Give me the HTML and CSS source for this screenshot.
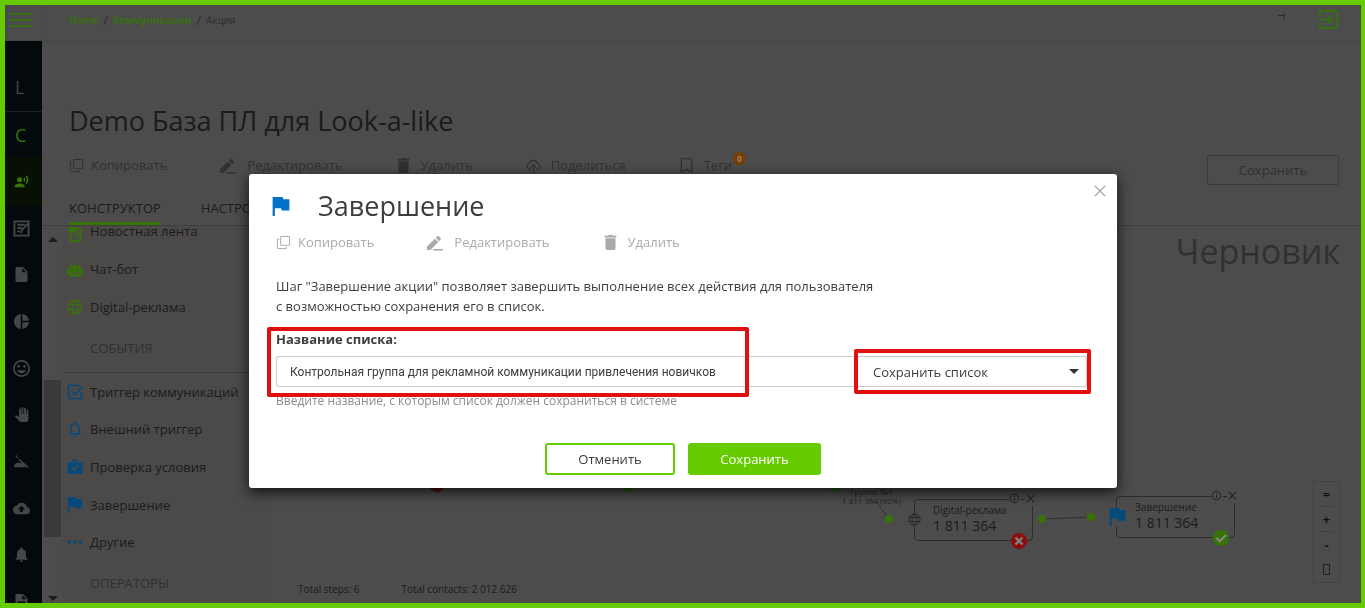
FILE: index.html
```html
<!DOCTYPE html>
<html lang="ru">
<head>
    <meta charset="UTF-8">
    <meta name="viewport" content="width=device-width, initial-scale=1.0">
    <title>Акция</title>
    <link rel="stylesheet" href="styles.css">
</head>
<body>
    <!-- Иконки -->
    <svg class="sprite" aria-hidden="true">
        <symbol id="i-copy" viewBox="0 0 16 16"><path d="M5 1.500h9.500v9.500H5zM3.500 4.500H1.500v10h9.500v-2" fill="none" stroke="currentColor" stroke-width="1"/></symbol>
        <symbol id="i-edit" viewBox="0 0 18 18"><path d="M1 13.200V17h3.800L13 8.600 9.400 5zM15.600 5.800c.4-.4.4-1 0-1.400L13.500 2.300c-.4-.4-1-.4-1.400 0L10.300 4.100l3.600 3.600zM8 16h10v1.400H7z"/></symbol>
        <symbol id="i-trash" viewBox="5 3 14 18"><path d="M6 19c0 1.100.9 2 2 2h8c1.100 0 2-.9 2-2V7H6zM19 4h-3.500l-1-1h-5l-1 1H5v2h14z"/></symbol>
        <symbol id="i-share" viewBox="0 0 18 18"><path d="M6 13.500H4.500A3.500 3.500 0 0 1 4 6.600a5.200 5.200 0 0 1 10 0 3.500 3.500 0 0 1-.5 6.900H12M9 17V8.500M6 11.200l3-3 3 3" fill="none" stroke="currentColor" stroke-width="1.300"/></symbol>
        <symbol id="i-tag" viewBox="5 3 14 18"><path d="M17 3H7c-1.100 0-2 .9-2 2v16l7-3 7 3V5c0-1.100-.9-2-2-2zm.5 15.500L12 16l-5.500 2.500v-14h11z"/></symbol>
        <symbol id="i-flag" viewBox="5 4 15 17"><path d="M14.400 6L14 4H5v17h2v-7h5.600l.4 2h7V6z"/></symbol>
        <symbol id="i-exit" viewBox="3 3 18 18"><path d="M10.090 15.590L11.500 17l5-5-5-5-1.410 1.410L12.670 11H3v2h9.670zM19 3H5a2 2 0 0 0-2 2v4h2V5h14v14H5v-4H3v4a2 2 0 0 0 2 2h14a2 2 0 0 0 2-2V5a2 2 0 0 0-2-2z"/></symbol>
        <symbol id="i-voice" viewBox="0 2 24 20"><circle cx="9" cy="9" r="4"/><path d="M9 15c-2.670 0-8 1.340-8 4v2h16v-2c0-2.660-5.330-4-8-4zM16.760 5.360l-1.680 1.690c.84 1.180.84 2.710 0 3.890l1.680 1.690c2.020-2.020 2.020-5.070 0-7.270zM20.070 2l-1.630 1.630c2.770 3.020 2.770 7.560 0 10.740L20.070 16c3.900-3.890 3.910-9.950 0-14z"/></symbol>
        <symbol id="i-note" viewBox="0 0 18 18"><path d="M1.500 1.500h15v15h-15z M4.500 5h8M4.500 8.500h5M4.500 12h3M8.500 14l1-3.500 6-6.500" fill="none" stroke="currentColor" stroke-width="2"/></symbol>
        <symbol id="i-file" viewBox="4 2 16 20"><path d="M6 2c-1.100 0-2 .9-2 2v16c0 1.100.9 2 2 2h12c1.100 0 2-.9 2-2V8l-6-6zm7 7V3.500L18.500 9z"/></symbol>
        <symbol id="i-pie" viewBox="2 2 20 20"><path d="M11 2v20c-5.070-.5-9-4.790-9-10s3.930-9.500 9-10zm2.030 0v8.990H22c-.47-4.740-4.240-8.520-8.970-8.990zm0 11.010V22c4.740-.47 8.500-4.250 8.970-8.990z"/></symbol>
        <symbol id="i-mood" viewBox="2 2 20 20"><path d="M12 2a10 10 0 1 0 0 20 10 10 0 0 0 0-20zm0 18a8 8 0 1 1 0-16 8 8 0 0 1 0 16zm3.500-9a1.500 1.500 0 1 0 0-3 1.500 1.500 0 0 0 0 3zm-7 0a1.500 1.500 0 1 0 0-3 1.500 1.500 0 0 0 0 3zm3.500 6.500c2.330 0 4.310-1.460 5.110-3.500H6.890c.8 2.040 2.780 3.500 5.110 3.500z"/></symbol>
        <symbol id="i-hand" viewBox="1 0 22 24"><path d="M23 5.500V20c0 2.200-1.800 4-4 4h-7.300c-1.080 0-2.100-.43-2.850-1.190L1 14.830s1.260-1.230 1.300-1.250c.22-.19.49-.29.79-.29.220 0 .42.060.6.160.4.010 4.310 2.460 4.310 2.460V4a1.500 1.500 0 0 1 3 0v7h1V1.500a1.500 1.500 0 0 1 3 0V11h1V2.500a1.500 1.500 0 0 1 3 0V11h1V5.500a1.500 1.500 0 0 1 3 0z"/></symbol>
        <symbol id="i-bed" viewBox="0 0 18 16"><path d="M3 0l2 5 3 1 10 9-2 .5L10 11 2 2zM1 11c3-2 6-2 9 0l4 4H0z"/></symbol>
        <symbol id="i-cloud" viewBox="0 4 24 16"><path fill-rule="evenodd" d="M19.350 10.040A7.490 7.490 0 0 0 12 4C9.110 4 6.600 5.640 5.350 8.040A5.994 5.994 0 0 0 0 14c0 3.310 2.690 6 6 6h13c2.760 0 5-2.240 5-5 0-2.640-2.050-4.780-4.650-4.960zM14 13v4h-4v-4H7l5-5 5 5z"/></symbol>
        <symbol id="i-bell" viewBox="4 2 16 20"><path d="M12 22c1.100 0 2-.9 2-2h-4a2 2 0 0 0 2 2zm6-6v-5c0-3.070-1.640-5.640-4.500-6.320V4a1.500 1.500 0 0 0-3 0v.68C7.630 5.360 6 7.920 6 11v5l-2 2v1h16v-1z"/></symbol>
        <symbol id="i-bell-o" viewBox="4 2 16 20"><path fill-rule="evenodd" d="M12 22c1.100 0 2-.9 2-2h-4a2 2 0 0 0 2 2zm6-6v-5c0-3.070-1.630-5.640-4.500-6.320V4a1.500 1.500 0 0 0-3 0v.68C7.640 5.360 6 7.920 6 11v5l-2 2v1h16v-1zm-2 1H8v-6c0-2.480 1.510-4.500 4-4.500s4 2.020 4 4.500z"/></symbol>
        <symbol id="i-doc" viewBox="4 2 16 20"><path fill-rule="evenodd" d="M4 2h10l6 6v14H4zM7 12h10v2H7zm0 5h10v2H7zM13 3.500V9h5.500z"/></symbol>
        <symbol id="i-news" viewBox="0 0 14 18"><path d="M3 3h10v14H2V8" fill="none" stroke="currentColor" stroke-width="2"/><path d="M0 1h8v6H0zM5 8h5v5H8V9H5z"/></symbol>
        <symbol id="i-bot" viewBox="0 0 16 16"><path d="M2 1l2.500 4M14 1l-2.500 4" stroke="currentColor"/><path fill-rule="evenodd" d="M4 4.500h8l2 2v1.500h2v5h-2v2.500H2V13H0V8h2V6.500zM4.500 7v2h2V7zm5 0v2h2V7zM3.500 10.500c1 4 8 4 9 0h-1.500c-1 2-5 2-6 0z"/></symbol>
        <symbol id="i-globe" viewBox="0 0 16 16"><path d="M8 1a7 7 0 1 0 0 14A7 7 0 0 0 8 1zM8 1c-4 4-4 10 0 14 4-4 4-10 0-14zM1.500 5.500h13M1.500 10.500h13" fill="none" stroke="currentColor" stroke-width="1.200"/></symbol>
        <symbol id="i-check" viewBox="0 0 16 16"><path d="M12 1.500H1.500v13h13V8M4.500 7l3.500 3.500L15 3" fill="none" stroke="currentColor" stroke-width="1.700"/></symbol>
        <symbol id="i-case" viewBox="0 0 16 16"><path fill-rule="evenodd" d="M5 3.500V1.500L6 .5h4l1 1v2h4.500V15H.5V3.500zM6.500 2v1.500h3V2zM4 9l3.200 3.200L12.300 7l-1.200-1.200-3.900 4-2-2z"/></symbol>
        <symbol id="i-dots" viewBox="0 0 14 4"><circle cx="2" cy="2" r="1.600"/><circle cx="7" cy="2" r="1.600"/><circle cx="12" cy="2" r="1.600"/></symbol>
        <symbol id="i-close" viewBox="0 0 12 12"><path d="M1 1l10 10M11 1L1 11" fill="none" stroke="currentColor" stroke-width="1.400"/></symbol>
        <symbol id="i-info" viewBox="0 0 12 12"><circle cx="6" cy="6" r="4.600" fill="none" stroke="currentColor"/><path d="M5.500 5.200h1v3.600h-1zM5.500 3.200h1v1.200h-1z"/></symbol>
    </svg>

    <div class="app">
        <header class="topbar">
            <button class="burger" aria-label="Меню"><span></span><span></span><span></span></button>
            <nav class="crumbs">
                <a href="#">Home</a><i>/</i><a href="#">Коммуникации</a><i>/</i><span>Акция</span>
            </nav>
            <span class="user">⊣</span>
            <a class="exit" href="#" aria-label="Выход"><svg><use href="#i-exit"/></svg></a>
        </header>

        <div class="body">
            <aside class="sidebar">
                <a class="letter letter-l" href="#">L</a>
                <a class="letter letter-c" href="#">C</a>
                <nav class="side-nav">
                    <a class="active" href="#"><svg><use href="#i-voice"/></svg></a>
                    <a href="#"><svg class="big"><use href="#i-note"/></svg></a>
                    <a href="#"><svg><use href="#i-file"/></svg></a>
                    <a href="#"><svg><use href="#i-pie"/></svg></a>
                    <a href="#"><svg class="big"><use href="#i-mood"/></svg></a>
                    <a href="#"><svg><use href="#i-hand"/></svg></a>
                    <a href="#"><svg><use href="#i-bed"/></svg></a>
                    <a href="#"><svg class="big"><use href="#i-cloud"/></svg></a>
                    <a href="#"><svg><use href="#i-bell"/></svg></a>
                    <a href="#"><svg><use href="#i-doc"/></svg></a>
                </nav>
            </aside>

            <main class="main">
                <div class="page-head">
                    <h1>Demo База ПЛ для Look-a-like</h1>
                    <div class="head-row">
                        <div class="tools">
                            <button><svg><use href="#i-copy"/></svg>Копировать</button>
                            <button><svg><use href="#i-edit"/></svg>Редактировать</button>
                            <button><svg><use href="#i-trash"/></svg>Удалить</button>
                            <button><svg><use href="#i-share"/></svg>Поделиться</button>
                            <button class="tags"><svg><use href="#i-tag"/></svg>Теги<span class="count">0</span></button>
                        </div>
                        <button class="save-page">Сохранить</button>
                    </div>
                    <div class="tabs">
                        <a class="current" href="#">КОНСТРУКТОР</a>
                        <a href="#">НАСТРОЙКИ</a>
                    </div>
                </div>

                <div class="builder">
                    <div class="scroll"><span class="arrow up"></span><span class="thumb"></span><span class="arrow down"></span></div>
                    <div class="palette">
                        <ul class="steps green">
                            <li><svg><use href="#i-news"/></svg>Новостная лента</li>
                            <li><svg><use href="#i-bot"/></svg>Чат-бот</li>
                            <li><svg><use href="#i-globe"/></svg>Digital-реклама</li>
                        </ul>
                        <h3>СОБЫТИЯ</h3>
                        <ul class="steps blue">
                            <li><svg><use href="#i-check"/></svg>Триггер коммуникаций</li>
                            <li><svg><use href="#i-bell-o"/></svg>Внешний триггер</li>
                            <li><svg><use href="#i-case"/></svg>Проверка условия</li>
                            <li><svg><use href="#i-flag"/></svg>Завершение</li>
                            <li><svg><use href="#i-dots"/></svg>Другие</li>
                        </ul>
                        <h3>ОПЕРАТОРЫ</h3>
                    </div>

                    <div class="canvas">
                        <div class="draft">Черновик</div>
                        <svg class="links" width="1091" height="376">
                            <g fill="none" stroke="#303030">
                                <path d="M606 277l12 16M774 293l46-2"/>
                            </g>
                            <circle cx="166" cy="258" r="8" fill="#5a0a0a"/>
                            <circle cx="357" cy="258" r="8" fill="#2a5a05"/>
                            <circle cx="563" cy="258" r="7" fill="#2a5a05"/>
                            <g fill="#377408">
                                <circle cx="618" cy="293" r="4"/>
                                <circle cx="771" cy="293" r="4"/>
                                <circle cx="820" cy="291" r="4"/>
                            </g>
                        </svg>
                        <div class="branch">Группа №1<br>1 811 364 (90%)</div>
                        <div class="node node-ads">
                            <svg class="kind"><use href="#i-globe"/></svg>
                            <span>Digital-реклама</span>
                            <b>1 811 364</b>
                            <div class="node-ctl"><svg><use href="#i-info"/></svg>-<svg><use href="#i-close"/></svg></div>
                            <svg class="state" viewBox="0 0 16 16"><circle cx="8" cy="8" r="8" fill="#8e0c0c"/><path d="M4.500 4.500l7 7M11.500 4.500l-7 7" stroke="#808080" stroke-width="2.400"/></svg>
                        </div>
                        <div class="node node-end">
                            <svg class="kind"><use href="#i-flag"/></svg>
                            <span>Завершение</span>
                            <b>1 811 364</b>
                            <div class="node-ctl"><svg><use href="#i-info"/></svg>-<svg><use href="#i-close"/></svg></div>
                            <svg class="state" viewBox="0 0 16 16"><circle cx="8" cy="8" r="8" fill="#377408"/><path d="M3.500 8l3.300 3.300L13 5" fill="none" stroke="#888" stroke-width="2"/></svg>
                        </div>
                        <div class="zoombox">
                            <button>=</button>
                            <button>+</button>
                            <button>-</button>
                            <button aria-label="Полный экран"><span class="tofu"></span></button>
                        </div>
                        <div class="totals"><span>Total steps: 6</span><span>Total contacts: 2 012 626</span></div>
                    </div>
                </div>
            </main>
        </div>
    </div>

    <!-- Модальное окно -->
    <div class="overlay">
        <form class="modal" role="dialog" aria-labelledby="modal-title">
            <button type="button" class="close" aria-label="Закрыть"><svg><use href="#i-close"/></svg></button>
            <div class="modal-head">
                <svg><use href="#i-flag"/></svg>
                <h2 id="modal-title">Завершение</h2>
            </div>
            <div class="tools">
                <button type="button"><svg><use href="#i-copy"/></svg>Копировать</button>
                <button type="button"><svg><use href="#i-edit"/></svg>Редактировать</button>
                <button type="button"><svg><use href="#i-trash"/></svg>Удалить</button>
            </div>
            <p class="about">Шаг "Завершение акции" позволяет завершить выполнение всех действия для пользователя<br>с возможностью сохранения его в список.</p>
            <div class="field">
                <label for="list-name">Название списка:</label>
                <div class="field-row">
                    <input type="text" id="list-name" value="Контрольная группа для рекламной коммуникации привлечения новичков">
                    <div class="pick">
                        <select id="list-action" aria-label="Действие со списком">
                            <option>Сохранить список</option>
                        </select>
                        <span class="mark mark-select"></span>
                    </div>
                </div>
                <small>Введите название, с которым список должен сохраниться в системе</small>
                <span class="mark mark-name"></span>
            </div>
            <div class="actions">
                <button type="button" class="cancel">Отменить</button>
                <button type="submit" class="save">Сохранить</button>
            </div>
        </form>
    </div>
</body>
</html>
```
FILE: styles.css
```css
/* General */
* {
    box-sizing: border-box;
}

body {
    margin: 0;
    font-family: 'Open Sans', 'Noto Sans', sans-serif;
    font-size: 13px;
    color: #1a1b1c;
    overflow: hidden;
}

a {
    color: inherit;
    text-decoration: none;
}

button {
    font: inherit;
    color: inherit;
    background: none;
    border: none;
    padding: 0;
    cursor: pointer;
}

svg {
    fill: currentColor;
    flex: none;
}

.sprite {
    display: none;
}

.app {
    display: flex;
    flex-direction: column;
    height: 100vh;
    border: 5px solid #6c0;
    border-right-width: 4px;
    background-color: #4c4c4c;
    overflow: hidden;
}

/* Topbar */
.topbar {
    display: flex;
    align-items: center;
    flex: none;
    height: 36px;
    padding-right: 23px;
    border-bottom: 1px solid #474747;
}

.burger {
    display: flex;
    flex-direction: column;
    gap: 4px;
    width: 38px;
    height: 35px;
    padding: 8px 11px 0 5px;
    border-right: 1px solid #474747;
}

.burger span {
    width: 21px;
    height: 2px;
    background-color: #37700f;
}

.crumbs {
    display: flex;
    align-items: center;
    gap: 5px;
    padding: 0 0 5px 26px;
    font-size: 10px;
    font-weight: 600;
    color: #377408;
}

.crumbs i {
    font-size: 13px;
    font-style: normal;
    font-weight: 400;
    color: #2b2b2b;
}

.crumbs span {
    font-weight: 400;
    color: #303030;
}

.user {
    margin-left: auto;
    padding: 0 34px 14px 0;
    font-size: 9px;
    line-height: 12px;
    color: #111;
}

.exit {
    height: 26px;
    color: #37700f;
}

.exit svg {
    width: 19px;
    height: 19px;
}

/* Sidebar */
.body {
    display: flex;
    flex: 1;
    min-height: 0;
}

.sidebar {
    flex: none;
    width: 37px;
    background-color: #040a0b;
    color: #434747;
    overflow: hidden;
}

.letter {
    display: flex;
    align-items: center;
    padding-left: 10px;
    font-size: 18px;
}

.letter-l {
    height: 71px;
    padding-top: 22px;
    border-bottom: 1px solid #1b2121;
}

.letter-c {
    height: 46px;
    color: #377408;
}

.side-nav {
    display: grid;
    grid-auto-rows: 1fr;
    height: 467px;
}

.side-nav a {
    display: flex;
    align-items: center;
    justify-content: center;
    padding-right: 5px;
}

.side-nav svg {
    width: 15px;
    height: 15px;
}

.side-nav svg.big {
    width: 17px;
    height: 17px;
}

.side-nav .active {
    background-color: #071003;
    color: #377408;
}

/* Page header */
.main {
    display: flex;
    flex-direction: column;
    flex: 1;
    min-width: 0;
}

.page-head {
    flex: none;
    padding: 61px 22px 0 27px;
    border-bottom: 1px solid #404040;
}

h1, h2 {
    margin: 0;
    font-size: 27px;
    font-weight: 400;
    line-height: 38px;
}

.head-row {
    display: flex;
    align-items: center;
    justify-content: space-between;
    height: 60px;
    color: #313131;
}

.tools {
    display: flex;
    align-items: center;
    gap: 52px;
}

.tools button {
    display: flex;
    align-items: center;
    gap: 7px;
}

.tools svg {
    width: 15px;
    height: 15px;
}

.tools button:nth-child(n+2) {
    gap: 11px;
}

.tools button:nth-child(n+2) svg {
    width: 17px;
    height: 17px;
}

.tools button:nth-child(n+3) {
    gap: 9px;
}

.tools button:nth-child(n+3) svg {
    height: 15px;
}

.head-row .tools {
    padding-bottom: 10px;
}

.tools .tags {
    position: relative;
    gap: 8px;
}

.tools .tags svg {
    width: 12px;
}

.count {
    position: absolute;
    top: -4px;
    right: -14px;
    width: 13px;
    height: 13px;
    border-radius: 50%;
    background-color: #7a3d03;
    color: #948474;
    font-size: 8px;
    font-weight: 700;
    line-height: 13px;
}

.save-page {
    width: 132px;
    height: 30px;
    border: 1px solid #3a3a3a;
    border-radius: 2px;
}

.tabs {
    display: flex;
    gap: 40px;
}

.tabs a {
    height: 25px;
    line-height: 16px;
}

.tabs .current {
    border-bottom: 3px solid #377408;
}

/* Builder */
.builder {
    display: flex;
    flex: 1;
    min-height: 0;
}

.scroll {
    display: flex;
    flex-direction: column;
    align-items: center;
    flex: none;
    width: 21px;
    padding: 11px 0 2px;
}

.arrow {
    border: 5px solid transparent;
}

.arrow.up {
    border-top: none;
    border-bottom-color: #1c1c1c;
}

.arrow.down {
    margin-top: auto;
    border-bottom: none;
    border-top-color: #1c1c1c;
}

.thumb {
    width: 17px;
    height: 157px;
    margin-top: 138px;
    background-color: #3a3a3a;
}

.palette {
    flex: none;
    width: 208px;
    background-color: #4c4949;
}

.steps {
    display: grid;
    grid-auto-rows: 1fr;
    margin: 0;
    padding: 0;
    list-style: none;
}

.steps li {
    display: flex;
    align-items: center;
    gap: 7px;
    padding-left: 4px;
}

.steps svg {
    width: 16px;
    height: 16px;
}

.green {
    height: 114px;
    margin-top: -14px;
}

.green svg {
    color: #377408;
}

.green li:first-child svg {
    margin-top: 6px;
}

.blue {
    height: 188px;
}

.blue svg {
    color: #064a7c;
}

.palette h3 {
    height: 47px;
    margin: 0;
    padding: 13px 0 0 27px;
    border-bottom: 1px solid #3d3b3b;
    font-size: 13px;
    font-weight: 400;
    line-height: 18px;
    color: #303030;
}

/* Canvas */
.canvas {
    position: relative;
    flex: 1;
    overflow: hidden;
}

.draft {
    padding: 2px 21px 0 0;
    font-size: 34px;
    line-height: 46px;
    text-align: right;
    color: #313131;
}

.links {
    position: absolute;
    top: 0;
    left: 0;
}

.branch {
    position: absolute;
    top: 261px;
    left: 571px;
    font-size: 8px;
    line-height: 9px;
    text-align: center;
    color: #222;
}

.node {
    position: absolute;
    width: 119px;
    height: 42px;
    padding: 4px 0 0 18px;
    border: 1px solid #2c2c2c;
    border-radius: 4px;
}

.node-ads {
    top: 273px;
    left: 643px;
}

.node-end {
    top: 270px;
    left: 845px;
}

.node span {
    display: block;
    font-size: 10px;
    line-height: 13px;
}

.node b {
    display: block;
    font-size: 14px;
    font-weight: 400;
    line-height: 18px;
}

.kind {
    position: absolute;
    top: 13px;
    left: -7px;
    width: 13px;
    height: 13px;
    color: #262626;
    background-color: #4c4c4c;
}

.node-end .kind {
    top: 11px;
    left: -8px;
    width: 17px;
    height: 18px;
    color: #064a7c;
}

.node-ctl {
    position: absolute;
    top: -10px;
    right: -3px;
    display: flex;
    align-items: center;
    gap: 1px;
    height: 16px;
    background-color: #4c4c4c;
}

.node-ctl svg {
    width: 11px;
    height: 11px;
}

.node-ctl svg:last-child {
    width: 9px;
    height: 9px;
}

.state {
    position: absolute;
    right: 5px;
    bottom: -9px;
    width: 16px;
    height: 16px;
}

.zoombox {
    position: absolute;
    right: 21px;
    bottom: 20px;
    width: 27px;
    padding: 0 5px;
    border: 1px solid #424242;
}

.zoombox button {
    display: flex;
    align-items: center;
    justify-content: center;
    width: 100%;
    height: 25px;
    font-weight: 700;
    color: #111;
}

.zoombox button:nth-child(-n+2) {
    border-bottom: 1px solid #404040;
}

.tofu {
    width: 7px;
    height: 11px;
    border: 1px solid #222;
}

.totals {
    position: absolute;
    left: 27px;
    bottom: 7px;
    display: flex;
    gap: 42px;
    font-size: 10px;
    line-height: 14px;
}

/* Modal */
.overlay {
    position: fixed;
    inset: 0;
    display: flex;
    justify-content: center;
    align-items: flex-start;
    padding: 174px 20px 0 21px;
}

.modal {
    position: relative;
    width: 100%;
    max-width: 868px;
    padding: 13px 30px 13px 27px;
    border-radius: 3px;
    background-color: #fff;
    box-shadow: 0 4px 14px rgba(0, 0, 0, 0.8);
    color: #3c3d3e;
}

.close {
    position: absolute;
    top: 11px;
    right: 11px;
    width: 12px;
    height: 12px;
    color: #aaa;
}

.close svg {
    display: block;
    width: 12px;
    height: 12px;
}

.modal-head {
    display: flex;
    align-items: center;
    gap: 28px;
    margin-left: -4px;
}

.modal-head svg {
    width: 18px;
    height: 19px;
    color: #0070c9;
}

.modal .tools {
    height: 34px;
    color: #aaa;
}

.about {
    margin: 17px 0 14px;
    line-height: 20px;
}

.field {
    position: relative;
}

.field label {
    display: block;
    margin-bottom: 8px;
    font-weight: 700;
    line-height: 18px;
}

.field-row {
    display: flex;
    height: 31px;
}

.field-row input {
    flex: 1;
    min-width: 0;
    padding: 0 13px;
    border: 1px solid #ccc;
    border-right: none;
    border-radius: 3px 0 0 3px;
    font-family: Roboto, 'Liberation Sans', sans-serif;
    font-size: 12px;
    color: #3c3d3e;
}

.pick {
    position: relative;
    width: 232px;
}

.pick::after {
    content: '';
    position: absolute;
    top: 13px;
    right: 8px;
    border: 5px solid transparent;
    border-top-color: #333;
    border-bottom: none;
}

.pick select {
    width: 100%;
    height: 31px;
    padding: 0 18px;
    border: 1px solid #ccc;
    border-left: none;
    border-radius: 0 3px 3px 0;
    background: #fff;
    font: inherit;
    color: inherit;
    appearance: none;
}

.field small {
    display: block;
    margin-top: 6px;
    font-size: 12px;
    line-height: 16px;
    color: #8a8c8e;
}

/* Red highlights */
.mark {
    position: absolute;
    border: 4px solid #e01010;
    border-radius: 2px;
    pointer-events: none;
}

.mark-name {
    top: -3px;
    left: -9px;
    width: 482px;
    height: 70px;
}

.mark-select {
    inset: -7px -4px -7px -1px;
}

.actions {
    display: flex;
    justify-content: center;
    gap: 13px;
    margin: 34px 0 0 3px;
}

.actions button {
    width: 130px;
    height: 32px;
    border: 2px solid #6c0;
    border-radius: 3px;
}

.actions .save {
    width: 133px;
    background-color: #6c0;
    color: #fff;
}
```
